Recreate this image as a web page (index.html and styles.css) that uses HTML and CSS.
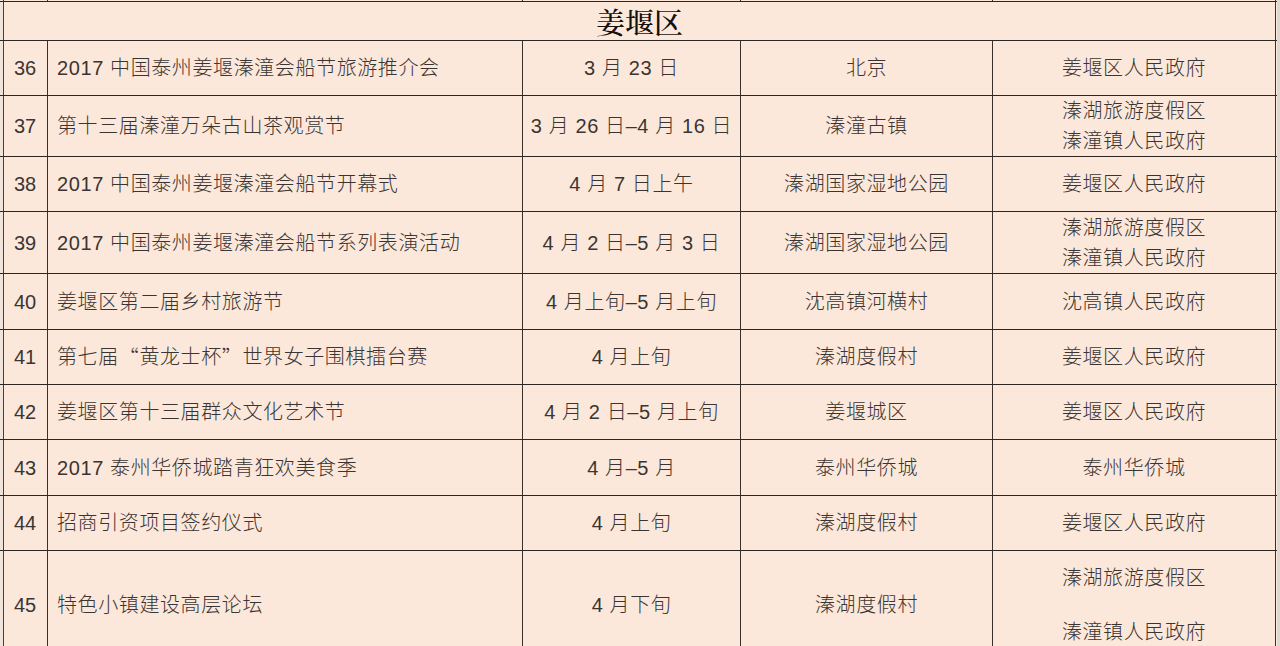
FILE: index.html
```html
<!DOCTYPE html>
<html lang="zh-CN">
<head>
<meta charset="utf-8">
<title>姜堰区</title>
<link rel="stylesheet" href="styles.css">
</head>
<body>
<div class="sheet">
  <div class="row sliver">
    <div class="cell c1"></div><div class="cell c2"></div><div class="cell c3"></div><div class="cell c4"></div><div class="cell c5"></div>
  </div>
  <div class="row head"><div class="cell full">姜堰区</div></div>
  <div class="row h55">
    <div class="cell c1">36</div><div class="cell c2">2017 中国泰州姜堰溱潼会船节旅游推介会</div><div class="cell c3">3 月 23 日</div><div class="cell c4">北京</div><div class="cell c5">姜堰区人民政府</div>
  </div>
  <div class="row h61">
    <div class="cell c1">37</div><div class="cell c2">第十三届溱潼万朵古山茶观赏节</div><div class="cell c3">3 月 26 日–4 月 16 日</div><div class="cell c4">溱潼古镇</div><div class="cell c5 stack"><span>溱湖旅游度假区</span><span>溱潼镇人民政府</span></div>
  </div>
  <div class="row h55">
    <div class="cell c1">38</div><div class="cell c2">2017 中国泰州姜堰溱潼会船节开幕式</div><div class="cell c3">4 月 7 日上午</div><div class="cell c4">溱湖国家湿地公园</div><div class="cell c5">姜堰区人民政府</div>
  </div>
  <div class="row h62">
    <div class="cell c1">39</div><div class="cell c2">2017 中国泰州姜堰溱潼会船节系列表演活动</div><div class="cell c3">4 月 2 日–5 月 3 日</div><div class="cell c4">溱湖国家湿地公园</div><div class="cell c5 stack"><span>溱湖旅游度假区</span><span>溱潼镇人民政府</span></div>
  </div>
  <div class="row h56">
    <div class="cell c1">40</div><div class="cell c2">姜堰区第二届乡村旅游节</div><div class="cell c3">4 月上旬–5 月上旬</div><div class="cell c4">沈高镇河横村</div><div class="cell c5">沈高镇人民政府</div>
  </div>
  <div class="row h55">
    <div class="cell c1">41</div><div class="cell c2">第七届<span class="q">“</span>黄龙士杯<span class="q">”</span>世界女子围棋擂台赛</div><div class="cell c3">4 月上旬</div><div class="cell c4">溱湖度假村</div><div class="cell c5">姜堰区人民政府</div>
  </div>
  <div class="row h55">
    <div class="cell c1">42</div><div class="cell c2">姜堰区第十三届群众文化艺术节</div><div class="cell c3">4 月 2 日–5 月上旬</div><div class="cell c4">姜堰城区</div><div class="cell c5">姜堰区人民政府</div>
  </div>
  <div class="row h56">
    <div class="cell c1">43</div><div class="cell c2">2017 泰州华侨城踏青狂欢美食季</div><div class="cell c3">4 月–5 月</div><div class="cell c4">泰州华侨城</div><div class="cell c5">泰州华侨城</div>
  </div>
  <div class="row h55">
    <div class="cell c1">44</div><div class="cell c2">招商引资项目签约仪式</div><div class="cell c3">4 月上旬</div><div class="cell c4">溱湖度假村</div><div class="cell c5">姜堰区人民政府</div>
  </div>
  <div class="row h108">
    <div class="cell c1">45</div><div class="cell c2">特色小镇建设高层论坛</div><div class="cell c3">4 月下旬</div><div class="cell c4">溱湖度假村</div><div class="cell c5 stack wide"><span>溱湖旅游度假区</span><span>溱潼镇人民政府</span></div>
  </div>
</div>
</body>
</html>
```

FILE: styles.css
```css
html, body {
  margin: 0;
  padding: 0;
  background: #dcd8d4;
  overflow: hidden;
}

.sheet {
  width: 1277px;
  height: 646px;
  overflow: hidden;
  background: #fce8da;
  font-family: "Liberation Sans", "Noto Sans CJK SC", sans-serif;
  font-size: 20px;
  font-weight: 300;
  color: #3a3533;
  letter-spacing: 0.6px;
}

.row {
  display: grid;
  grid-template-columns: 4px 44px 475px 218px 252px 283px;
  box-sizing: border-box;
  border-bottom: 1px solid #2e2622;
}

.row::before {
  content: "";
  border-right: 1px solid #4a403b;
  background: #efe3da;
}

.cell {
  box-sizing: border-box;
  border-right: 1px solid #3a302b;
  display: flex;
  align-items: center;
  justify-content: center;
  line-height: 30px;
  white-space: nowrap;
}

.c2 {
  justify-content: flex-start;
  padding-left: 9px;
}

.c1 {
  padding-right: 1px;
  letter-spacing: 0;
}

.sliver { height: 2px; }
.head { height: 39px; }
.h55 { height: 55px; }
.h56 { height: 56px; }
.h61 { height: 61px; }
.h62 { height: 62px; }
.h108 { height: 108px; }

.full {
  grid-column: 2 / 7;
  font-family: "Noto Serif CJK SC", "Noto Sans CJK SC", serif;
  font-size: 29px;
  font-weight: 500;
  color: #141010;
  letter-spacing: 0;
  padding-top: 1px;
}

.stack {
  flex-direction: column;
}

.stack.wide {
  gap: 24px;
}

.q {
  font-family: "Noto Sans CJK SC", sans-serif;
}
```
